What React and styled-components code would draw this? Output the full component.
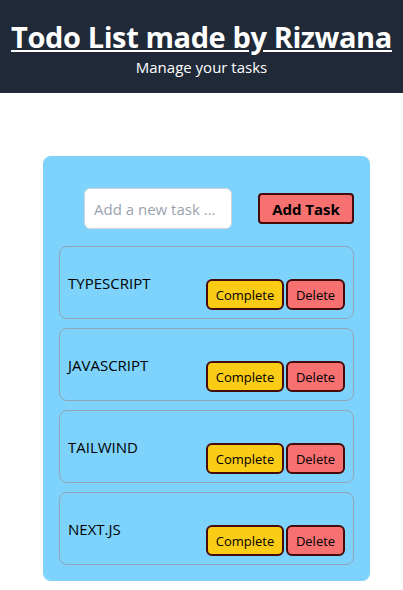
import styled, { createGlobalStyle } from "styled-components";

const GlobalStyle = createGlobalStyle`
  * {
    box-sizing: border-box;
  }

  body {
    margin: 0;
    font-family: "Open Sans", "Noto Sans", sans-serif;
    background: #ffffff;
  }
`;

const tasks = ["TYPESCRIPT", "JAVASCRIPT", "TAILWIND", "NEXT.JS"];

const App = () => {
  return (
    <>
      <GlobalStyle />
      <Header>
        <Title>Todo List made by Rizwana</Title>
        <Subtitle>Manage your tasks</Subtitle>
      </Header>

      <Card>
        <AddRow>
          <TaskInput type="text" placeholder="Add a new task ..." />
          <AddButton>Add Task</AddButton>
        </AddRow>

        <TaskList>
          {tasks.map((task) => (
            <TaskItem key={task}>
              <TaskText>{task}</TaskText>
              <Actions>
                <ActionButton $color="#facc15" $width={78}>
                  Complete
                </ActionButton>
                <ActionButton $color="#f87171" $width={59}>
                  Delete
                </ActionButton>
              </Actions>
            </TaskItem>
          ))}
        </TaskList>
      </Card>
    </>
  );
};

export default App;

const Header = styled.header`
  background: #1f2937;
  color: #ffffff;
  text-align: center;
  padding: 19px 0 14px;
`;

const Title = styled.h1`
  margin: 0;
  font-size: 29px;
  line-height: 36px;
  font-weight: 700;
  letter-spacing: -0.4px;
  text-decoration: underline;
  white-space: nowrap;
`;

const Subtitle = styled.p`
  margin: 0;
  font-size: 15px;
  line-height: 24px;
`;

const Card = styled.main`
  width: 327px;
  margin: 63px 0 0 43px;
  padding: 32px 16px 16px;
  background: #7dd3fc;
  border-radius: 8px;
`;

const AddRow = styled.div`
  display: flex;
  justify-content: flex-end;
  align-items: center;
  gap: 26px;
  margin-bottom: 17px;
`;

const TaskInput = styled.input`
  width: 148px;
  height: 41px;
  padding: 0 9px;
  border: 1px solid #d1d5db;
  border-radius: 6px;
  font-family: inherit;
  font-size: 15px;
  color: #111827;
  outline: none;

  &::placeholder {
    color: #9ca3af;
  }
`;

const AddButton = styled.button`
  width: 96px;
  height: 31px;
  padding: 0;
  background: #f87171;
  border: 2px solid #450a0a;
  border-radius: 4px;
  font-family: inherit;
  font-size: 15px;
  font-weight: 700;
  color: #000000;
  cursor: pointer;
`;

const TaskList = styled.ul`
  list-style: none;
  margin: 0;
  padding: 0;
  display: flex;
  flex-direction: column;
  gap: 9px;
`;

const TaskItem = styled.li`
  display: flex;
  justify-content: space-between;
  align-items: center;
  height: 73px;
  padding: 8px;
  border: 1px solid #94a3b8;
  border-radius: 8px;
`;

const TaskText = styled.span`
  font-size: 15px;
  color: #000000;
`;

const Actions = styled.div`
  display: flex;
  gap: 2px;
  align-self: flex-end;
`;

const ActionButton = styled.button`
  width: ${(props) => props.$width}px;
  height: 31px;
  padding: 0;
  background: ${(props) => props.$color};
  border: 2px solid #450a0a;
  border-radius: 6px;
  font-family: inherit;
  font-size: 13px;
  color: #000000;
  cursor: pointer;
`;
